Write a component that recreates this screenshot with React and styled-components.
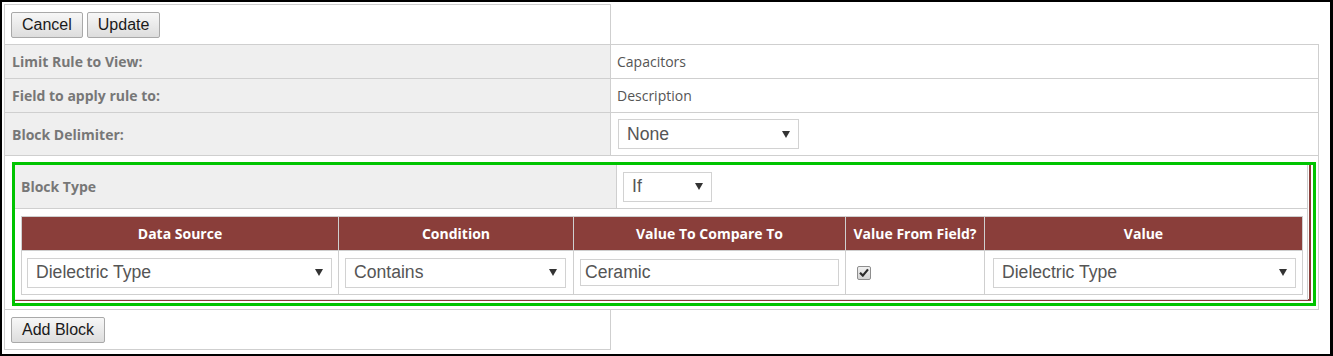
import React from 'react';
import styled, { createGlobalStyle } from 'styled-components';

const Global = createGlobalStyle`
  html, body { margin: 0; padding: 0; background: #fff; }
  body { font-family: "Open Sans", "Noto Sans", sans-serif; }
  *, *::before, *::after { box-sizing: border-box; }
`;

const LINE = '#cfcfcf';
const BROWN = '#8a3e3a';

const Frame = styled.div`
  width: 1333px;
  height: 356px;
  border-style: solid;
  border-color: #000;
  border-width: 2px 3px 2px 2px;
  padding: 2px;
  background: #fff;
  overflow: hidden;
`;

const Form = styled.div`
  display: grid;
  grid-template-columns: 607px 708px;
  grid-template-rows: 41px 34px 34px 43px 154px 40px;
`;

const Cell = styled.div`
  display: flex;
  align-items: ${p => (p.$top ? 'flex-start' : 'center')};
  background: ${p => (p.$label ? '#efefef' : '#fff')};
  border-style: solid;
  border-color: ${LINE};
  border-width: ${p => p.$b || '0 1px 1px 1px'};
  padding: ${p => p.$pad || '0'};
  grid-column: ${p => (p.$full ? '1 / -1' : 'auto')};
`;

const Label = styled.span`
  font-family: "Open Sans", "Noto Sans", sans-serif;
  font-weight: 700;
  font-size: 14px;
  color: #777;
`;

const Value = styled.span`
  font-family: "Open Sans", "Noto Sans", sans-serif;
  font-size: 14px;
  color: #555;
`;

const ButtonRow = styled.div`
  display: flex;
  gap: 4px;
`;

const Button = styled.button`
  height: 26px;
  padding: 0 10px;
  border: 1px solid #a9a9a9;
  border-radius: 2px;
  background: linear-gradient(#f7f7f7, #dddddd);
  font-family: "Liberation Sans", Arial, sans-serif;
  font-size: 16px;
  color: #1a1a1a;
  line-height: 24px;
  cursor: pointer;
`;

const SelectBox = styled.div`
  display: flex;
  align-items: center;
  justify-content: space-between;
  width: ${p => p.$w || '100%'};
  height: 30px;
  padding: 0 8px 0 8px;
  border: 1px solid #d2d2d2;
  background: #fff;
  font-family: "Liberation Sans", Arial, sans-serif;
  font-size: 17.6px;
  color: #555;
`;

const Arrow = () => (
  <svg width="8" height="7" viewBox="0 0 8 7">
    <path d="M0 0 L8 0 L4 7 Z" fill="#333" />
  </svg>
);

const Select = ({ value, w }) => (
  <SelectBox $w={w}>
    <span>{value}</span>
    <Arrow />
  </SelectBox>
);

const TextInput = styled.div`
  display: flex;
  align-items: center;
  width: 100%;
  height: 27px;
  padding: 0 4px;
  border: 1px solid #d2d2d2;
  background: #fff;
  font-family: "Liberation Sans", Arial, sans-serif;
  font-size: 17.6px;
  color: #555;
`;

const CheckBox = styled.span`
  display: inline-flex;
  align-items: center;
  justify-content: center;
  width: 14px;
  height: 14px;
  border: 1px solid #8e8e8e;
  border-radius: 2px;
  background: linear-gradient(#f0f0f0, #d2d2d2);
`;

const GreenBox = styled.div`
  width: 100%;
  height: 100%;
  border: 3px solid #00c400;
`;

const Block = styled.div`
  height: calc(100% - 2px);
  margin-right: 2px;
  padding-right: 1px;
  border-right: 2px solid ${BROWN};
  border-bottom: 2px solid ${BROWN};
  display: grid;
  grid-template-rows: 44px 1fr;
`;

const BlockRow = styled.div`
  display: grid;
  grid-template-columns: 602px 1fr;
  border-bottom: 1px solid ${LINE};
  border-right: 1px solid ${LINE};
`;

const BlockCell = styled.div`
  display: flex;
  align-items: center;
  padding: 0 6px;
  background: ${p => (p.$label ? '#efefef' : '#fff')};
  border-right: ${p => (p.$label ? `1px solid ${LINE}` : '0')};
`;

const DataWrap = styled.div`
  padding: 7px 4px 4px 6px;
  border-right: 1px solid ${LINE};
  border-bottom: 1px solid #e2e2e2;
`;

const DataTable = styled.div`
  display: grid;
  grid-template-columns: 317px 235px 272px 139px 318px;
  grid-template-rows: 34px 44px;
  border-left: 1px solid ${LINE};
  border-top: 1px solid ${LINE};
`;

const Th = styled.div`
  display: flex;
  align-items: center;
  justify-content: center;
  background: ${BROWN};
  border-right: 1px solid ${LINE};
  border-bottom: 1px solid ${LINE};
  font-family: "Open Sans", "Noto Sans", sans-serif;
  font-weight: 700;
  font-size: 14px;
  color: #fff;
`;

const Td = styled.div`
  display: flex;
  align-items: center;
  padding: ${p => p.$pad || '0 6px'};
  background: #fff;
  border-right: 1px solid ${LINE};
  border-bottom: 1px solid ${LINE};
`;

const headers = ['Data Source', 'Condition', 'Value To Compare To', 'Value From Field?', 'Value'];

export default function App() {
  return (
    <>
      <Global />
      <Frame>
        <Form>
          <Cell $b="1px 1px 1px 1px" $pad="0 6px">
            <ButtonRow>
              <Button>Cancel</Button>
              <Button>Update</Button>
            </ButtonRow>
          </Cell>
          <Cell $b="0 0 1px 0" />

          <Cell $label $pad="0 7px">
            <Label>Limit Rule to View:</Label>
          </Cell>
          <Cell $b="0 1px 1px 0" $pad="0 6px">
            <Value>Capacitors</Value>
          </Cell>

          <Cell $label $pad="0 7px">
            <Label>Field to apply rule to:</Label>
          </Cell>
          <Cell $b="0 1px 1px 0" $pad="0 6px">
            <Value>Description</Value>
          </Cell>

          <Cell $label $pad="0 7px">
            <Label>Block Delimiter:</Label>
          </Cell>
          <Cell $b="0 1px 1px 0" $pad="0 7px">
            <Select value="None" w="181px" />
          </Cell>

          <Cell $full $top $pad="6px 2px 3px 7px">
            <GreenBox>
              <Block>
                <BlockRow>
                  <BlockCell $label>
                    <Label>Block Type</Label>
                  </BlockCell>
                  <BlockCell>
                    <Select value="If" w="89px" />
                  </BlockCell>
                </BlockRow>
                <DataWrap>
                  <DataTable>
                    {headers.map(h => (
                      <Th key={h}>{h}</Th>
                    ))}
                    <Td $pad="0 6px 0 5px">
                      <Select value="Dielectric Type" />
                    </Td>
                    <Td $pad="0 7px 0 6px">
                      <Select value="Contains" />
                    </Td>
                    <Td>
                      <TextInput>Ceramic</TextInput>
                    </Td>
                    <Td $pad="0 0 0 11px">
                      <CheckBox>
                        <svg width="10" height="9" viewBox="0 0 10 9">
                          <path d="M1 4.8 L3.8 7.6 L9 1.4" fill="none" stroke="#2b2b2b" strokeWidth="2.2" />
                        </svg>
                      </CheckBox>
                    </Td>
                    <Td $pad="0 6px 0 8px">
                      <Select value="Dielectric Type" />
                    </Td>
                  </DataTable>
                </DataWrap>
              </Block>
            </GreenBox>
          </Cell>

          <Cell $b="0 1px 1px 1px" $top $pad="7px 6px">
            <Button>Add Block</Button>
          </Cell>
          <Cell $b="0" />
        </Form>
      </Frame>
    </>
  );
}
